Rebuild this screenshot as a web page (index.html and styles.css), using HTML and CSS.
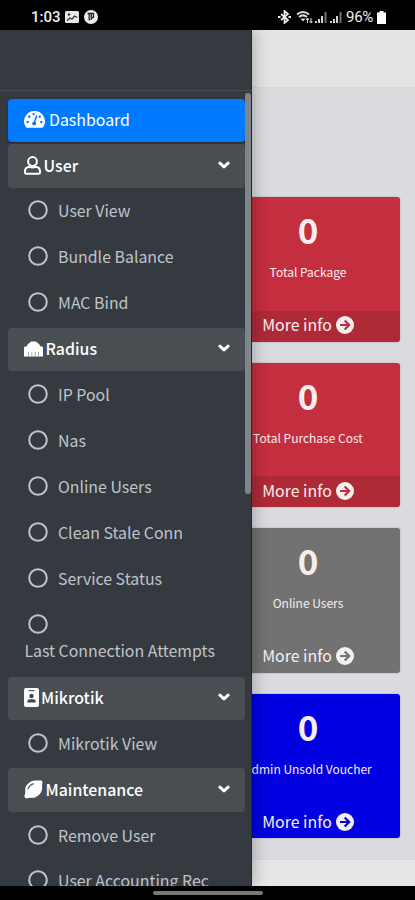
FILE: index.html
```html
<!DOCTYPE html>
<html lang="en">
<head>
<meta charset="utf-8">
<title>Dashboard</title>
<link rel="stylesheet" href="styles.css">
</head>
<body>
<svg width="0" height="0" class="defs">
  <symbol id="chev" viewBox="0 0 12 8"><path d="M1.900 2.200L6 5.900l4.100-3.700" fill="none" stroke="#fff" stroke-width="3" stroke-linecap="round" stroke-linejoin="round"/></symbol>
  <symbol id="ring" viewBox="0 0 20 20"><circle cx="10" cy="10" r="8.800" fill="none" stroke="currentColor" stroke-width="2"/></symbol>
  <symbol id="go" viewBox="0 0 18 18"><circle cx="9" cy="9" r="9" fill="#f5f0f0"/><path d="M4 9h9M8.700 4.500L13.200 9l-4.500 4.500" fill="none" stroke="var(--card)" stroke-width="2.200"/></symbol>
</svg>
<div class="phone">
  <header class="status">
    <span class="time">1:03</span>
    <svg class="pic" viewBox="0 0 14 12"><rect width="14" height="12" rx="1.5" fill="#e8e8e8"/><path d="M2 9.500l3-2.500 2 1.200L9.500 5l2.800 1.500" fill="none" stroke="#333" stroke-width="1.300"/><circle cx="4" cy="3.500" r="1.200" fill="#333"/></svg>
    <svg class="badge" viewBox="0 0 14 14"><circle cx="7" cy="7" r="7" fill="#eee"/><path d="M3.500 3.500h6v4H7M5.200 4v6.500M7.300 4v6" fill="none" stroke="#222" stroke-width="1.300"/></svg>
    <span class="spacer"></span>
    <svg class="bt" viewBox="0 0 13 14"><path d="M3 4l7 6-3.500 3V1L10 4l-7 6" fill="none" stroke="#eee" stroke-width="1.700"/><path d="M0 7h2.500M10.500 7H13" stroke="#eee" stroke-width="1.800"/></svg>
    <svg class="wifi" viewBox="0 0 17 14"><path d="M1 4.500q6-5 12 0M3 7q4-3.200 8 0" fill="none" stroke="#ddd" stroke-width="2"/><path d="M4.500 8.500h5L7 11.500z" fill="#ddd"/><path d="M11.500 13V8.500M10 10l1.500-2L13 10M15 8v4.500M13.700 11l1.300 2 1.300-2" fill="none" stroke="#ddd" stroke-width="1"/></svg>
    <svg class="sig" viewBox="0 0 12 12"><path d="M1 12v-2M4 12V8M7 12V5" stroke="#ddd" stroke-width="1.900"/><path d="M10.500 12V1" stroke="#777" stroke-width="1.900"/></svg>
    <svg class="sig two" viewBox="0 0 12 12"><path d="M1 12v-2M4 12V8M7 12V5" stroke="#ddd" stroke-width="1.900"/><path d="M10.500 12V1" stroke="#777" stroke-width="1.900"/></svg>
    <span class="pct">96%</span>
    <svg class="bat" viewBox="0 0 9 13"><path d="M2.500 0h4v1.600H9V13H0V1.600h2.500z" fill="#fff"/></svg>
  </header>

  <div class="screen">
    <main class="page">
      <div class="topbar"></div>
      <section class="cards">
        <article class="card red"><b>0</b><p>Total Package</p><a>More info <svg><use href="#go"/></svg></a></article>
        <article class="card red"><b>0</b><p>Total Purchase Cost</p><a>More info <svg><use href="#go"/></svg></a></article>
        <article class="card gray"><b>0</b><p>Online Users</p><a>More info <svg><use href="#go"/></svg></a></article>
        <article class="card blue"><b>0</b><p>Admin Unsold Voucher</p><a>More info <svg><use href="#go"/></svg></a></article>
      </section>
      <footer class="pagefoot"></footer>
    </main>

    <aside class="drawer">
      <div class="brand"></div>
      <nav>
        <a class="item active"><svg class="dash" viewBox="0 0 21 17"><path d="M10.500 0A10.400 10.400 0 001.600 15.800q.600 1 1.600 1h14.600q1 0 1.600-1A10.400 10.400 0 0010.500 0z" fill="#fff"/><path d="M10 12.400l2.500-7.500" stroke="#007bff" stroke-width="1.500" stroke-linecap="round"/><g fill="#007bff"><circle cx="10.200" cy="12.500" r="2"/><circle cx="3.700" cy="11" r="1.200"/><circle cx="5.300" cy="5.800" r="1.200"/><circle cx="9.600" cy="3.200" r="1.100"/><circle cx="15.800" cy="5.800" r="1.200"/><circle cx="17.300" cy="11" r="1.200"/></g></svg><span class="g4">Dashboard</span></a>
        <a class="item head"><svg class="user" viewBox="0 0 17 19"><g fill="none" stroke="#fff" stroke-width="2"><circle cx="8.500" cy="5.500" r="4.400"/><path d="M5 10.800C2.400 11.300 1 13 1 15.200v1.300q0 1.300 1.300 1.300h12.400q1.300 0 1.300-1.300v-1.300c0-2.200-1.400-3.900-4-4.400q-3.500 1.200-7 0z"/></g></svg><span class="g3">User</span><svg class="chev"><use href="#chev"/></svg></a>
        <a class="item sub"><svg><use href="#ring"/></svg><span>User View</span></a>
        <a class="item sub"><svg><use href="#ring"/></svg><span>Bundle Balance</span></a>
        <a class="item sub"><svg><use href="#ring"/></svg><span>MAC Bind</span></a>
        <a class="item head"><svg class="port" viewBox="0 0 19 16"><path d="M0 15V6.800q0-1 1-1.300h1.500L4 3l2-1.500L7 .500h5L13 1.500 15 3l1.500 2.500H18q1 .300 1 1.300V15q0 .500-.500.500H.5Q0 15.500 0 15z" fill="#fff"/><path d="M4.500 11v4.500M7.800 11v4.500M11.200 11v4.500M14.500 11v4.500" stroke="#a5a8ab" stroke-width="1"/></svg><span class="g3">Radius</span><svg class="chev"><use href="#chev"/></svg></a>
        <a class="item sub"><svg><use href="#ring"/></svg><span>IP Pool</span></a>
        <a class="item sub"><svg><use href="#ring"/></svg><span>Nas</span></a>
        <a class="item sub"><svg><use href="#ring"/></svg><span>Online Users</span></a>
        <a class="item sub"><svg><use href="#ring"/></svg><span>Clean Stale Conn</span></a>
        <a class="item sub"><svg><use href="#ring"/></svg><span>Service Status</span></a>
        <a class="item sub tall"><svg><use href="#ring"/></svg><span>Last Connection Attempts</span></a>
        <a class="item head"><svg class="idb" viewBox="0 0 15 19"><rect width="15" height="19" rx="2" fill="#fff"/><path d="M4.500 2.600h6" stroke="#4a4e53" stroke-width="1.100"/><circle cx="7.500" cy="8" r="2.200" fill="#40454a"/><path d="M3.300 14.500q0-3.200 2.500-3.200h3.400q2.500 0 2.500 3.200z" fill="#40454a"/></svg><span class="g2">Mikrotik</span><svg class="chev"><use href="#chev"/></svg></a>
        <a class="item sub"><svg><use href="#ring"/></svg><span>Mikrotik View</span></a>
        <a class="item head"><svg class="lemon" viewBox="0 0 19 19"><path d="M18 1q-1.300-1.300-3-.500c-2 .500-4-.900-7.600.700C3 3.200.600 7.500 1.300 11.500c.300 1.800-.900 3.600-.900 5q.500 2 2.500 2c1.500 0 3-.900 5-.600 4 0 8-3 9.500-6.500 1.500-3.500.300-6 .900-7.900Q18.900 2 18 1z" fill="#fff"/><path d="M4 8.700Q5.500 5 9.500 3.700" fill="none" stroke="#4a4e53" stroke-width="1.100" stroke-linecap="round"/></svg><span class="g3">Maintenance</span><svg class="chev"><use href="#chev"/></svg></a>
        <a class="item sub"><svg><use href="#ring"/></svg><span>Remove User</span></a>
        <a class="item sub"><svg><use href="#ring"/></svg><span>User Accounting Rec</span></a>
      </nav>
      <i class="scroll"></i>
    </aside>
  </div>
  <div class="gesture"><i></i></div>
</div>
</body>
</html>
```

FILE: styles.css
```css
* { box-sizing: border-box; }
body { margin: 0; background: #000; font-family: "Noto Sans CJK SC", "Noto Sans", sans-serif; }
.defs { position: absolute; }
.phone { width: 415px; height: 900px; display: flex; flex-direction: column; overflow: hidden; }
.status { height: 30px; flex: none; display: flex; align-items: center; padding: 4px 29px 0 31px; color: #eee; font: 500 15px/20px Roboto, sans-serif; }
.status svg { flex: none; }
.time { width: 34px; }
.pic { width: 14px; height: 12px; }
.badge { width: 14px; height: 14px; margin-left: 5px; }
.spacer { flex: 1; }
.bt { width: 13px; height: 14px; }
.wifi { width: 17px; height: 14px; margin-left: 5px; }
.sig { width: 12px; height: 12px; margin-left: 2px; }
.sig.two { margin-left: 3px; }
.pct { margin-left: 4px; width: 31px; font-size: 15px; font-weight: 400; white-space: nowrap; letter-spacing: -.3px; }
.bat { width: 9px; height: 13px; }
.screen { position: relative; height: 856px; flex: none; overflow: hidden; }
.page { height: 856px; background: #d9dbdf; display: flex; flex-direction: column; }
.topbar { height: 58px; background: #e4e4e4; border-bottom: 1px solid #d4d6d9; flex: none; }
.cards { flex: 1; padding: 109px 15px 0 216px; display: flex; flex-direction: column; gap: 21px; }
.card { --card: #c52e3e; height: 144.500px; flex: none; display: flex; flex-direction: column; align-items: center; background: var(--card); border-radius: 3px; color: #f6eeee; box-shadow: 0 0 2px rgba(0,0,0,.25); }
.card b { font-size: 35px; line-height: 40px; margin-top: 12px; }
.card p { margin: 14px 0 0; font-size: 12px; line-height: 18px; white-space: nowrap; }
.card a { margin-top: auto; width: 100%; height: 31px; display: flex; align-items: center; justify-content: center; gap: 4px; font-size: 15.900px; line-height: 24px; padding-bottom: 2px; background: rgba(0,0,0,.1); border-radius: 0 0 3px 3px; }
.card svg { width: 18px; height: 18px; }
.gray { --card: #727272; }
.blue { --card: #0000e0; }
.gray a, .blue a { background: none; }
.pagefoot { height: 27px; background: #e6e6e6; border-top: 1px solid #d5d7da; flex: none; }
.drawer { position: absolute; left: 0; top: 0; width: 252px; height: 856px; background: #353a40; box-shadow: 0 0 16px rgba(0,0,0,.32), inset -1px 0 #25292e; }
.brand { height: 61px; border-bottom: 1px solid #484d53; }
nav { padding: 7.500px 7.500px 0 8.400px; display: flex; flex-direction: column; gap: 2.600px; }
.item { height: 43.300px; flex: none; display: flex; align-items: center; padding: 0 0 1px 15.600px; border-radius: 4px; color: #fff; font-size: 15.900px; line-height: 26px; white-space: nowrap; }
.active { background: #007bff; box-shadow: 0 1px 3px rgba(0,0,0,.25); }
.head { background: #494e53; font-weight: 500; }
.dash { width: 21px; height: 17px; }
.user { width: 17px; height: 19px; }
.port { width: 19px; height: 16px; }
.idb { width: 15px; height: 19px; }
.lemon { width: 19px; height: 19px; }
.chev { width: 12px; height: 8px; margin: 0 14.500px 2px auto; }
.g4 { margin-left: 4px; }
.g3 { margin-left: 2.500px; }
.g2 { margin-left: 2px; }
.sub { color: #bfc4ca; padding-left: 19.600px; }
.sub svg { width: 20px; height: 20px; margin-bottom: 2px; }
.sub span { margin-left: 10px; }
.tall { height: 70.800px; flex-direction: column; align-items: flex-start; padding-top: 11px; }
.tall svg { flex: none; margin-bottom: 4px; }
.tall span { margin-left: -3.600px; }
.scroll { position: absolute; left: 245px; top: 63px; width: 6px; height: 401px; border-radius: 3px; background: #80858a; }
.gesture { flex: 1; display: flex; justify-content: center; padding-top: 5px; }
.gesture i { width: 110px; height: 4px; border-radius: 2px; background: #777; }
```
